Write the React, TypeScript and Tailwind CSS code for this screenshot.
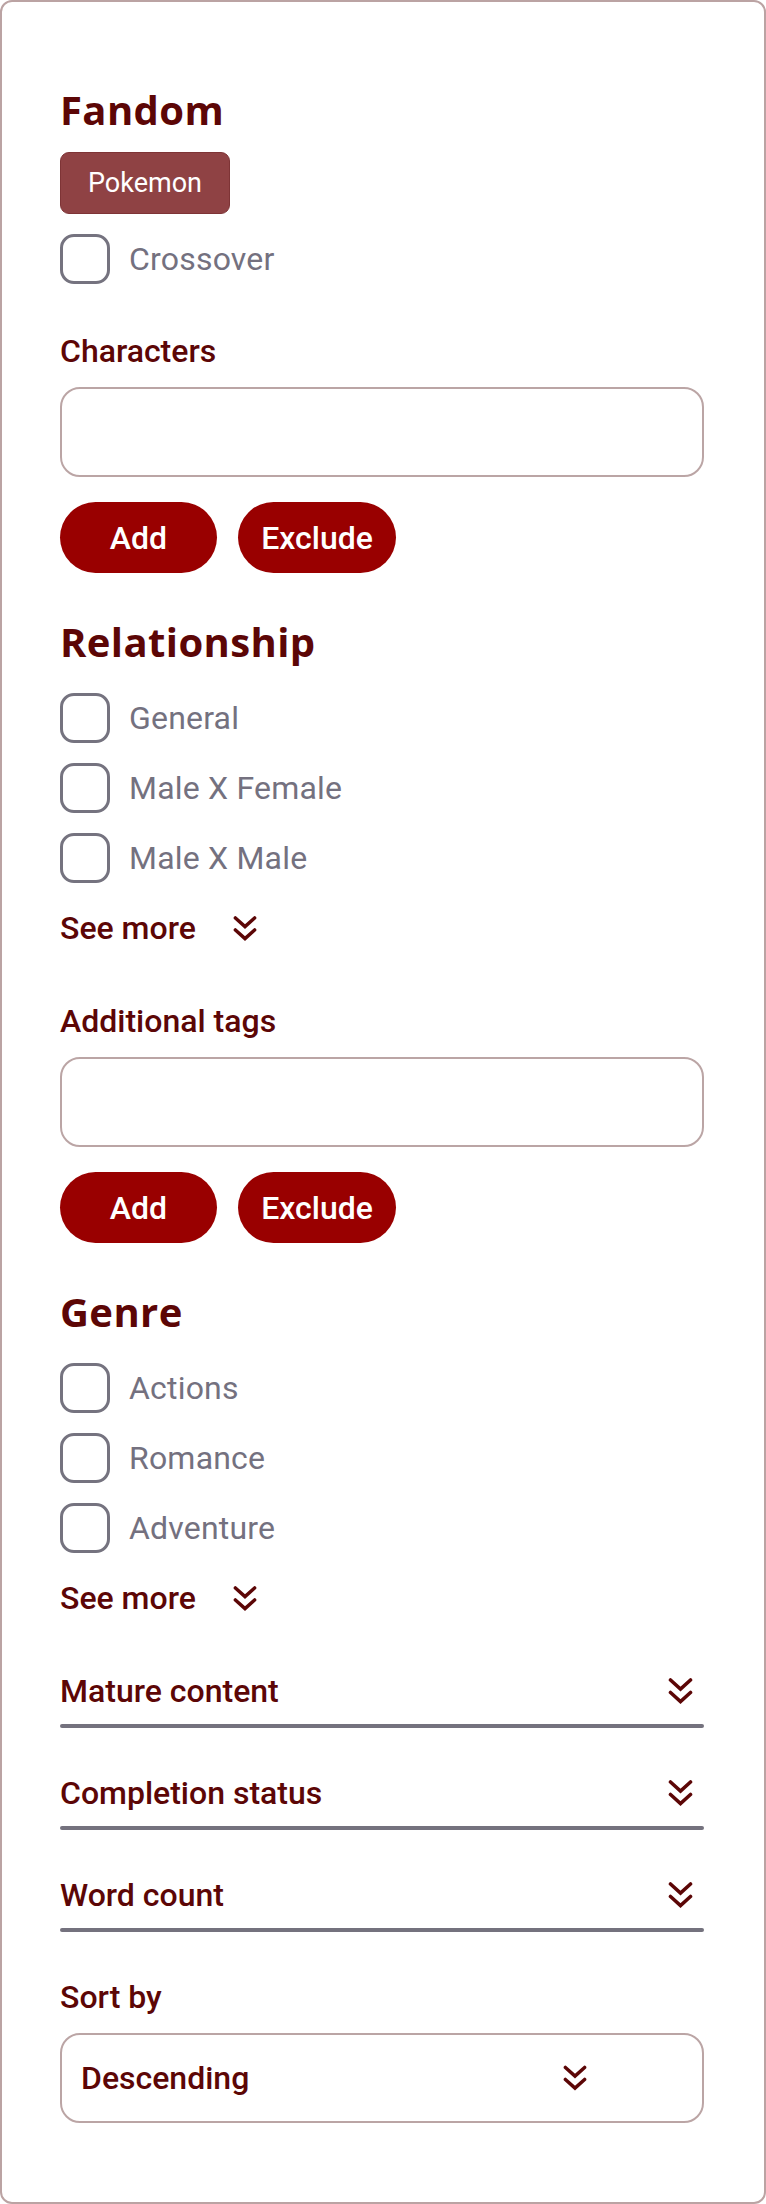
import React from 'react';

const headingFont = { fontFamily: '"Open Sans", "Noto Sans", sans-serif' };
const bodyFont = { fontFamily: 'Roboto, "Noto Sans", sans-serif' };

const DoubleChevron: React.FC<{ className?: string }> = ({ className }) => (
    <svg className={className} viewBox="0 0 25 27" fill="none" stroke="#5c0606" strokeWidth={3.6} strokeLinecap="round" strokeLinejoin="miter">
        <path d="M2.5 2.5 L12.5 11.5 L22.5 2.5" />
        <path d="M2.5 15 L12.5 24 L22.5 15" />
    </svg>
);

const SectionHeading: React.FC<{ title: string; className?: string }> = ({ title, className }) => (
    <h2 className={`text-[40px] leading-[48px] font-bold tracking-[0.4px] text-[#5c0606] ${className || ''}`} style={headingFont}>
        {title}
    </h2>
);

const FieldLabel: React.FC<{ text: string; className?: string }> = ({ text, className }) => (
    <p className={`text-[32px] leading-[40px] font-medium text-[#5c0606] ${className || ''}`}>{text}</p>
);

const CheckRow: React.FC<{ label: string }> = ({ label }) => (
    <label className="flex items-center gap-[19px]">
        <span className="w-[50px] h-[50px] rounded-[14px] border-[3px] border-[#75737f] bg-white shrink-0" />
        <span className="text-[32px] leading-[40px] tracking-[0.2px] text-[#74717f]">{label}</span>
    </label>
);

const TagInput: React.FC<{ label: string; className?: string }> = ({ label, className }) => (
    <div className={`flex flex-col ${className || ''}`}>
        <FieldLabel text={label} />
        <div className="mt-[16px] h-[90px] w-full rounded-[20px] border-2 border-[#bba5a5] bg-white" />
        <div className="mt-[25px] flex gap-[21px]">
            <button className="w-[157px] h-[71px] rounded-full bg-[#990000] text-white text-[32px] font-medium">Add</button>
            <button className="w-[158px] h-[71px] rounded-full bg-[#990000] text-white text-[32px] font-medium">Exclude</button>
        </div>
    </div>
);

const SeeMore: React.FC = () => (
    <div className="mt-[25px] flex items-center gap-[37px] h-[40px]">
        <span className="text-[32px] leading-[40px] font-medium text-[#5c0606]">See more</span>
        <DoubleChevron className="w-[24px] h-[27px]" />
    </div>
);

const AccordionRow: React.FC<{ title: string; className?: string }> = ({ title, className }) => (
    <div className={`flex flex-col ${className || ''}`}>
        <div className="flex items-center justify-between h-[40px] pr-[11px]">
            <span className="text-[32px] leading-[40px] font-medium text-[#5c0606]">{title}</span>
            <DoubleChevron className="w-[25px] h-[28px]" />
        </div>
        <div className="mt-[13px] h-[4px] w-full rounded-full bg-[#74727e]" />
    </div>
);

const App: React.FC = () => {
    return (
        <div className="w-[766px] bg-white" style={bodyFont}>
            <div className="h-[2204px] rounded-[12px] border-2 border-[#bba3a3] pl-[58px] pr-[60px] pt-[84px] flex flex-col">
                <SectionHeading title="Fandom" />
                <div className="mt-[18px] w-[170px] h-[62px] rounded-[9px] bg-[#8f4244] border border-[#7e3436] flex items-center justify-center">
                    <span className="text-[27px] text-white">Pokemon</span>
                </div>
                <div className="mt-[20px]">
                    <CheckRow label="Crossover" />
                </div>

                <TagInput label="Characters" className="mt-[47px]" />

                <SectionHeading title="Relationship" className="mt-[45px]" />
                <div className="mt-[27px] flex flex-col gap-[20px]">
                    <CheckRow label="General" />
                    <CheckRow label="Male X Female" />
                    <CheckRow label="Male X Male" />
                </div>
                <SeeMore />

                <TagInput label="Additional tags" className="mt-[53px]" />

                <SectionHeading title="Genre" className="mt-[45px]" />
                <div className="mt-[27px] flex flex-col gap-[20px]">
                    <CheckRow label="Actions" />
                    <CheckRow label="Romance" />
                    <CheckRow label="Adventure" />
                </div>
                <SeeMore />

                <AccordionRow title="Mature content" className="mt-[53px]" />
                <AccordionRow title="Completion status" className="mt-[45px]" />
                <AccordionRow title="Word count" className="mt-[45px]" />

                <FieldLabel text="Sort by" className="mt-[45px]" />
                <div className="mt-[16px] h-[90px] w-full rounded-[20px] border-2 border-[#bba5a5] bg-white flex items-center pl-[19px] pr-[115px]">
                    <span className="flex-1 text-[32px] leading-[40px] font-medium text-[#5c0606]">Descending</span>
                    <DoubleChevron className="w-[24px] h-[28px]" />
                </div>
            </div>
        </div>
    );
};

export default App;
